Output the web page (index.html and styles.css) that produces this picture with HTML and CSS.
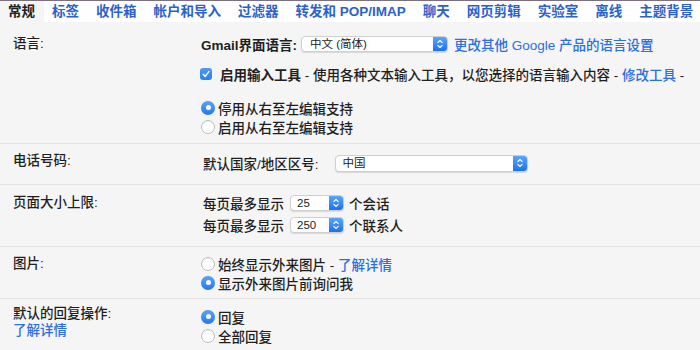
FILE: index.html
```html
<!DOCTYPE html>
<html lang="zh-CN">
<head>
<meta charset="utf-8">
<title>设置</title>
<link rel="stylesheet" href="styles.css">
</head>
<body>
<div class="topline"></div>
<nav class="tabs">
  <span class="tab active">常规</span>
  <a class="tab">标签</a>
  <a class="tab">收件箱</a>
  <a class="tab">帐户和导入</a>
  <a class="tab">过滤器</a>
  <a class="tab">转发和 POP/IMAP</a>
  <a class="tab">聊天</a>
  <a class="tab">网页剪辑</a>
  <a class="tab">实验室</a>
  <a class="tab">离线</a>
  <a class="tab">主题背景</a>
</nav>
<main class="settings">
  <section class="row row-lang">
    <div class="label">语言:</div>
    <div class="content">
      <div class="line line-select">
        <b class="strong">Gmail界面语言:</b>
        <span class="select sel-lang"><span class="sel-text">中文 (简体)</span><span class="stepper"><svg viewBox="0 0 14 16" width="14" height="16"><path d="M4.5 6.5 L7 4 L9.5 6.5 M4.5 9.5 L7 12 L9.5 9.5" fill="none" stroke="#fff" stroke-width="1.3" stroke-linecap="round" stroke-linejoin="round"/></svg></span></span>
        <a class="link lang-link">更改其他 Google 产品的语言设置</a>
      </div>
      <div class="line line-check">
        <span class="checkbox"><svg viewBox="0 0 12 12" width="12" height="12"><path d="M3.2 6.3 L5.2 8.4 L8.9 3.6" fill="none" stroke="#fff" stroke-width="1.5" stroke-linecap="round" stroke-linejoin="round"/></svg></span>
        <span class="nowrap"><b class="strong">启用输入工具</b> - 使用各种文本输入工具，以您选择的语言输入内容 - <a class="link">修改工具</a> -</span>
      </div>
      <div class="radios">
        <div class="radio-line"><span class="radio on"></span><span>停用从右至左编辑支持</span></div>
        <div class="radio-line"><span class="radio"></span><span>启用从右至左编辑支持</span></div>
      </div>
    </div>
  </section>

  <section class="row row-phone">
    <div class="label">电话号码:</div>
    <div class="content">
      <div class="line">
        <span class="text-in">默认国家/地区区号:</span>
        <span class="select sel-country"><span class="sel-text">中国</span><span class="stepper"><svg viewBox="0 0 14 16" width="14" height="16"><path d="M4.5 6.5 L7 4 L9.5 6.5 M4.5 9.5 L7 12 L9.5 9.5" fill="none" stroke="#fff" stroke-width="1.3" stroke-linecap="round" stroke-linejoin="round"/></svg></span></span>
      </div>
    </div>
  </section>

  <section class="row row-size">
    <div class="label">页面大小上限:</div>
    <div class="content">
      <div class="line">
        <span class="text-in per-page">每页最多显示</span>
        <span class="select sel-num"><span class="sel-text">25</span><span class="stepper"><svg viewBox="0 0 14 16" width="14" height="16"><path d="M4.5 6.5 L7 4 L9.5 6.5 M4.5 9.5 L7 12 L9.5 9.5" fill="none" stroke="#fff" stroke-width="1.3" stroke-linecap="round" stroke-linejoin="round"/></svg></span></span>
        <span class="unit">个会话</span>
      </div>
      <div class="line">
        <span class="text-in per-page">每页最多显示</span>
        <span class="select sel-num"><span class="sel-text">250</span><span class="stepper"><svg viewBox="0 0 14 16" width="14" height="16"><path d="M4.5 6.5 L7 4 L9.5 6.5 M4.5 9.5 L7 12 L9.5 9.5" fill="none" stroke="#fff" stroke-width="1.3" stroke-linecap="round" stroke-linejoin="round"/></svg></span></span>
        <span class="unit">个联系人</span>
      </div>
    </div>
  </section>

  <section class="row row-images">
    <div class="label">图片:</div>
    <div class="content">
      <div class="radio-line"><span class="radio"></span><span class="nowrap">始终显示外来图片 - <a class="link">了解详情</a></span></div>
      <div class="radio-line"><span class="radio on"></span><span>显示外来图片前询问我</span></div>
    </div>
  </section>

  <section class="row row-reply">
    <div class="label">默认的回复操作:<br><a class="link">了解详情</a></div>
    <div class="content">
      <div class="radio-line"><span class="radio on"></span><span>回复</span></div>
      <div class="radio-line"><span class="radio"></span><span>全部回复</span></div>
    </div>
  </section>
</main>
</body>
</html>
```

FILE: styles.css
```css
html, body {
  margin: 0;
  padding: 0;
}
body {
  width: 700px;
  height: 350px;
  overflow: hidden;
  background: #f5f5f5;
  color: #1f1f1f;
  font-family: "Liberation Sans", "Noto Sans CJK SC", sans-serif;
  font-size: 13.5px;
  font-weight: 500;
}
.topline {
  height: 1px;
  background: #7b717e;
}
.tabs {
  display: flex;
  height: 21px;
  background: #fff;
  white-space: nowrap;
}
.tab {
  padding: 0 8.5px;
  line-height: 21px;
  font-weight: bold;
  color: #2a62c9;
  text-decoration: none;
}
.tab.active {
  padding-left: 8px;
  background: #f5f5f5;
  color: #222;
}
.settings {
  display: flex;
  flex-direction: column;
}
.row {
  display: grid;
  grid-template-columns: 200px 1fr;
  border-top: 1px solid #e2e2e2;
}
.row-lang {
  border-top: none;
}
.label {
  padding-left: 13px;
}
.strong {
  font-weight: bold;
}
.link {
  color: #2c6fe0;
  text-decoration: none;
}
.line {
  display: flex;
  align-items: center;
  white-space: nowrap;
}
.nowrap {
  white-space: nowrap;
}

/* row: language */
.row-lang .label {
  padding-top: 12px;
  line-height: 20px;
}
.row-lang .content {
  padding: 12px 0 7px;
}
.row-lang .line {
  height: 20px;
}
.line-select .strong {
  padding-left: 1px;
}
.line-check {
  margin-top: 10px;
}
.radios {
  margin-top: 14px;
}

/* select */
.select {
  display: inline-flex;
  align-items: stretch;
  height: 16px;
  background: #fff;
  border: 1px solid #cfcfcf;
  border-radius: 4px;
  box-shadow: 0 1px 1px rgba(0, 0, 0, 0.12);
  box-sizing: border-box;
  font-size: 11.5px;
  font-weight: normal;
  color: #222;
  overflow: hidden;
}
.sel-text {
  flex: 1;
  padding-left: 7px;
  line-height: 14px;
}
.stepper {
  display: flex;
  align-items: center;
  justify-content: center;
  width: 14px;
  background: linear-gradient(#5aa6fb, #1b72f0);
}
.stepper svg {
  width: 14px;
  height: 14px;
}
.sel-lang {
  width: 147px;
  margin-left: 4px;
}
.sel-lang .sel-text {
  padding-left: 8px;
}
.lang-link {
  margin-left: 6px;
}
.sel-country {
  width: 193px;
  height: 17px;
  margin-left: 16px;
}
.sel-num {
  width: 54px;
  margin-left: 6px;
}
.sel-num .sel-text {
  padding-left: 6px;
}
.unit {
  margin-left: 5px;
}
.text-in {
  padding-left: 3px;
}

/* checkbox */
.checkbox {
  display: inline-flex;
  width: 12px;
  height: 12px;
  border-radius: 3px;
  background: linear-gradient(#4b9bf8, #2a7ff2);
  margin-right: 8px;
  flex: none;
}

/* radio */
.radio-line {
  display: flex;
  align-items: center;
  height: 19px;
  white-space: nowrap;
}
.radio {
  flex: none;
  width: 14px;
  height: 14px;
  box-sizing: border-box;
  margin-left: 1px;
  margin-right: 3px;
  border-radius: 50%;
  background: #fff;
  border: 1px solid #bdbdbd;
  box-shadow: inset 0 1px 1px rgba(0, 0, 0, 0.06);
  display: inline-flex;
  align-items: center;
  justify-content: center;
}
.radio.on {
  border: none;
  background: linear-gradient(#5aa6fb, #2277f1);
}
.radio.on::after {
  content: "";
  width: 5px;
  height: 5px;
  border-radius: 50%;
  background: #fff;
}

/* row: phone */
.row-phone .label {
  padding-top: 7px;
  line-height: 20px;
}
.row-phone .content {
  padding: 9px 0 11px;
}
.row-phone .line {
  height: 20px;
}

/* row: page size */
.row-size .label {
  padding-top: 7px;
  line-height: 22px;
}
.row-size .content {
  padding: 7px 0 10px;
}
.row-size .line {
  height: 22px;
}

/* row: images */
.row-images .label {
  padding-top: 7px;
  line-height: 19px;
}
.row-images .content {
  padding: 7px 0 6px;
}

/* row: reply */
.row-reply .label {
  padding-top: 6px;
  line-height: 17px;
}
.row-reply .content {
  padding: 8px 0 6px;
}
```
